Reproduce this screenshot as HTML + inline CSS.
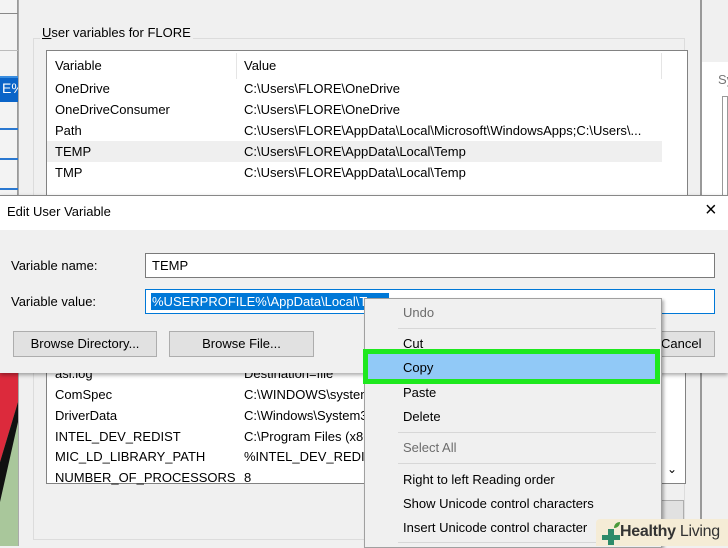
<!DOCTYPE html>
<html><head><style>
*{margin:0;padding:0;box-sizing:border-box}
body{width:728px;height:546px;overflow:hidden;position:relative;background:#f0f0f0;font-family:"Liberation Sans",sans-serif;font-size:13px;color:#000}
.a{position:absolute;white-space:nowrap}
</style></head><body>
<!-- left strip -->
<div class="a" style="left:0;top:0;width:18px;height:372px;background:#f3f3f3;border-right:1px solid #999"></div>
<div class="a" style="left:0;top:13px;width:18px;height:1px;background:#888"></div>
<div class="a" style="left:0;top:50px;width:18px;height:1px;background:#bbb"></div>
<div class="a" style="left:0;top:76px;width:18px;height:26px;background:#0a64c8;border-top:2px solid #3a8ee0"></div>
<div class="a" style="left:2px;top:80px;color:#fff;font-size:14px">E%</div>
<div class="a" style="left:0;top:128px;width:18px;height:2px;background:#2a78d0"></div>
<div class="a" style="left:0;top:158px;width:18px;height:2px;background:#2a78d0"></div>
<div class="a" style="left:0;top:188px;width:18px;height:2px;background:#2a78d0"></div>
<svg class="a" style="left:0;top:372px" width="18" height="174"><rect width="18" height="174" fill="#a9c79b"/><polygon points="0,0 18,0 18,30 0,90" fill="#dc2a3c"/><polygon points="18,30 18,50 0,130 0,90" fill="#111"/></svg>
<!-- main window -->
<div class="a" style="left:18px;top:0;width:682px;height:546px;background:#f0f0f0;border-left:1px solid #aaa"></div>
<div class="a" style="left:33px;top:38px;width:652px;height:502px;border:1px solid #dcdcdc"></div>
<div class="a" style="left:40px;top:25px;background:#f0f0f0;padding:0 2px"><u>U</u>ser variables for FLORE</div>
<div class="a" style="left:46px;top:50px;width:642px;height:150px;background:#fff;border:1px solid #828282"></div>
<div class="a" style="left:236px;top:53px;width:1px;height:26px;background:#e5e5e5"></div>
<div class="a" style="left:661px;top:53px;width:1px;height:26px;background:#e5e5e5"></div>
<div class="a" style="left:47px;top:141px;width:615px;height:21px;background:#efefef"></div>
<div class="a" style="left:55px;top:58px">Variable</div><div class="a" style="left:244px;top:58px">Value</div>
<div class="a" style="left:55px;top:81px">OneDrive</div><div class="a" style="left:244px;top:81px">C:\Users\FLORE\OneDrive</div>
<div class="a" style="left:55px;top:102px">OneDriveConsumer</div><div class="a" style="left:244px;top:102px">C:\Users\FLORE\OneDrive</div>
<div class="a" style="left:55px;top:123px">Path</div><div class="a" style="left:244px;top:123px">C:\Users\FLORE\AppData\Local\Microsoft\WindowsApps;C:\Users\...</div>
<div class="a" style="left:55px;top:144px">TEMP</div><div class="a" style="left:244px;top:144px">C:\Users\FLORE\AppData\Local\Temp</div>
<div class="a" style="left:55px;top:165px">TMP</div><div class="a" style="left:244px;top:165px">C:\Users\FLORE\AppData\Local\Temp</div>
<!-- right window -->
<div class="a" style="left:700px;top:0;width:28px;height:546px;background:#f0f0f0;border-left:2px solid #999"></div>
<div class="a" style="left:702px;top:62px;width:26px;height:134px;background:#fff"></div>
<div class="a" style="left:718px;top:72px;color:#777">Sy</div>
<div class="a" style="left:722px;top:96px;width:6px;height:100px;border:1px solid #999;background:#fff"></div>
<!-- lower list -->
<div class="a" style="left:46px;top:360px;width:640px;height:124px;background:#fff;border:1px solid #828282"></div>
<div class="a" style="left:661px;top:372px;width:24px;height:111px;background:#fff;border-left:1px solid #ddd"></div>
<div class="a" style="left:667px;top:462px;font-size:12px">&#8964;</div>
<div class="a" style="left:640px;top:500px;width:44px;height:40px;background:#e1e1e1;border:1px solid #adadad"></div>
<div class="a" style="left:55px;top:366px">asl.log</div><div class="a" style="left:244px;top:366px">Destination=file</div>
<div class="a" style="left:55px;top:387px">ComSpec</div><div class="a" style="left:244px;top:387px">C:\WINDOWS\system32\cmd.exe</div>
<div class="a" style="left:55px;top:408px">DriverData</div><div class="a" style="left:244px;top:408px">C:\Windows\System32\Drivers</div>
<div class="a" style="left:55px;top:429px">INTEL_DEV_REDIST</div><div class="a" style="left:244px;top:429px">C:\Program Files (x86)</div>
<div class="a" style="left:55px;top:449px">MIC_LD_LIBRARY_PATH</div><div class="a" style="left:244px;top:449px">%INTEL_DEV_REDIST%</div>
<div class="a" style="left:55px;top:470px">NUMBER_OF_PROCESSORS</div><div class="a" style="left:244px;top:470px">8</div>
<!-- edit dialog -->
<div class="a" style="left:0;top:195px;width:728px;height:178px;background:#f0f0f0;border-top:1px solid #888;box-shadow:0 2px 4px rgba(0,0,0,.35)"></div>
<div class="a" style="left:0;top:196px;width:728px;height:34px;background:#fff"></div>
<div class="a" style="left:7px;top:204px">Edit User Variable</div>
<div class="a" style="left:705px;top:199px;font-size:20px;font-weight:300">&#215;</div>
<div class="a" style="left:11px;top:258px">Variable name:</div>
<div class="a" style="left:145px;top:253px;width:570px;height:25px;background:#fff;border:1px solid #7a7a7a"></div>
<div class="a" style="left:152px;top:258px">TEMP</div>
<div class="a" style="left:11px;top:294px">Variable value:</div>
<div class="a" style="left:145px;top:289px;width:570px;height:25px;background:#fff;border:1px solid #0078d7"></div>
<div class="a" style="left:151px;top:293px;width:238px;height:17px;background:#0078d7"></div>
<div class="a" style="left:152px;top:294px;color:#fff">%USERPROFILE%\AppData\Local\Te</div>
<div class="a" style="left:13px;top:331px;width:144px;height:26px;background:#e1e1e1;border:1px solid #adadad;text-align:center;line-height:24px">Browse Directory...</div>
<div class="a" style="left:169px;top:331px;width:145px;height:26px;background:#e1e1e1;border:1px solid #adadad;text-align:center;line-height:24px">Browse File...</div>
<div class="a" style="left:600px;top:331px;width:115px;height:26px;background:#e1e1e1;border:1px solid #adadad;line-height:24px;padding-left:60px">Cancel</div>
<!-- context menu -->
<div class="a" style="left:364px;top:298px;width:298px;height:250px;background:#f0f0f0;border:1px solid #a0a0a0;box-shadow:2px 2px 3px rgba(0,0,0,.3)"></div>
<div class="a" style="left:398px;top:328px;width:258px;height:1px;background:#d7d7d7"></div>
<div class="a" style="left:398px;top:432px;width:258px;height:1px;background:#d7d7d7"></div>
<div class="a" style="left:398px;top:463px;width:258px;height:1px;background:#d7d7d7"></div>
<div class="a" style="left:398px;top:542px;width:258px;height:1px;background:#d7d7d7"></div>
<div class="a" style="left:363px;top:349px;width:297px;height:35px;background:#91c9f7;border:5px solid #1ee81e"></div>
<div class="a" style="left:403px;top:305px;color:#6d6d6d">Undo</div>
<div class="a" style="left:403px;top:336px">Cut</div>
<div class="a" style="left:403px;top:360px">Copy</div>
<div class="a" style="left:403px;top:385px">Paste</div>
<div class="a" style="left:403px;top:409px">Delete</div>
<div class="a" style="left:403px;top:440px;color:#6d6d6d">Select All</div>
<div class="a" style="left:403px;top:472px">Right to left Reading order</div>
<div class="a" style="left:403px;top:496px">Show Unicode control characters</div>
<div class="a" style="left:403px;top:520px">Insert Unicode control character</div>
<!-- watermark -->
<div class="a" style="left:596px;top:519px;width:132px;height:27px;background:#f5ecd6;border-radius:4px 0 0 0"></div>
<svg class="a" style="left:600px;top:521px" width="22" height="24"><path d="M8 8h6v6h6v5h-6v5h-6v-5H2v-5h6z" fill="#2e8b6a"/><path d="M14 7c0-4 3-6 6-6 0 3-2 6-6 6z" fill="#4a9a3a"/></svg>
<div class="a" style="left:620px;top:523px;font-size:16px;letter-spacing:-0.3px;color:#333"><b>Healthy</b> Living</div>
</body></html>
